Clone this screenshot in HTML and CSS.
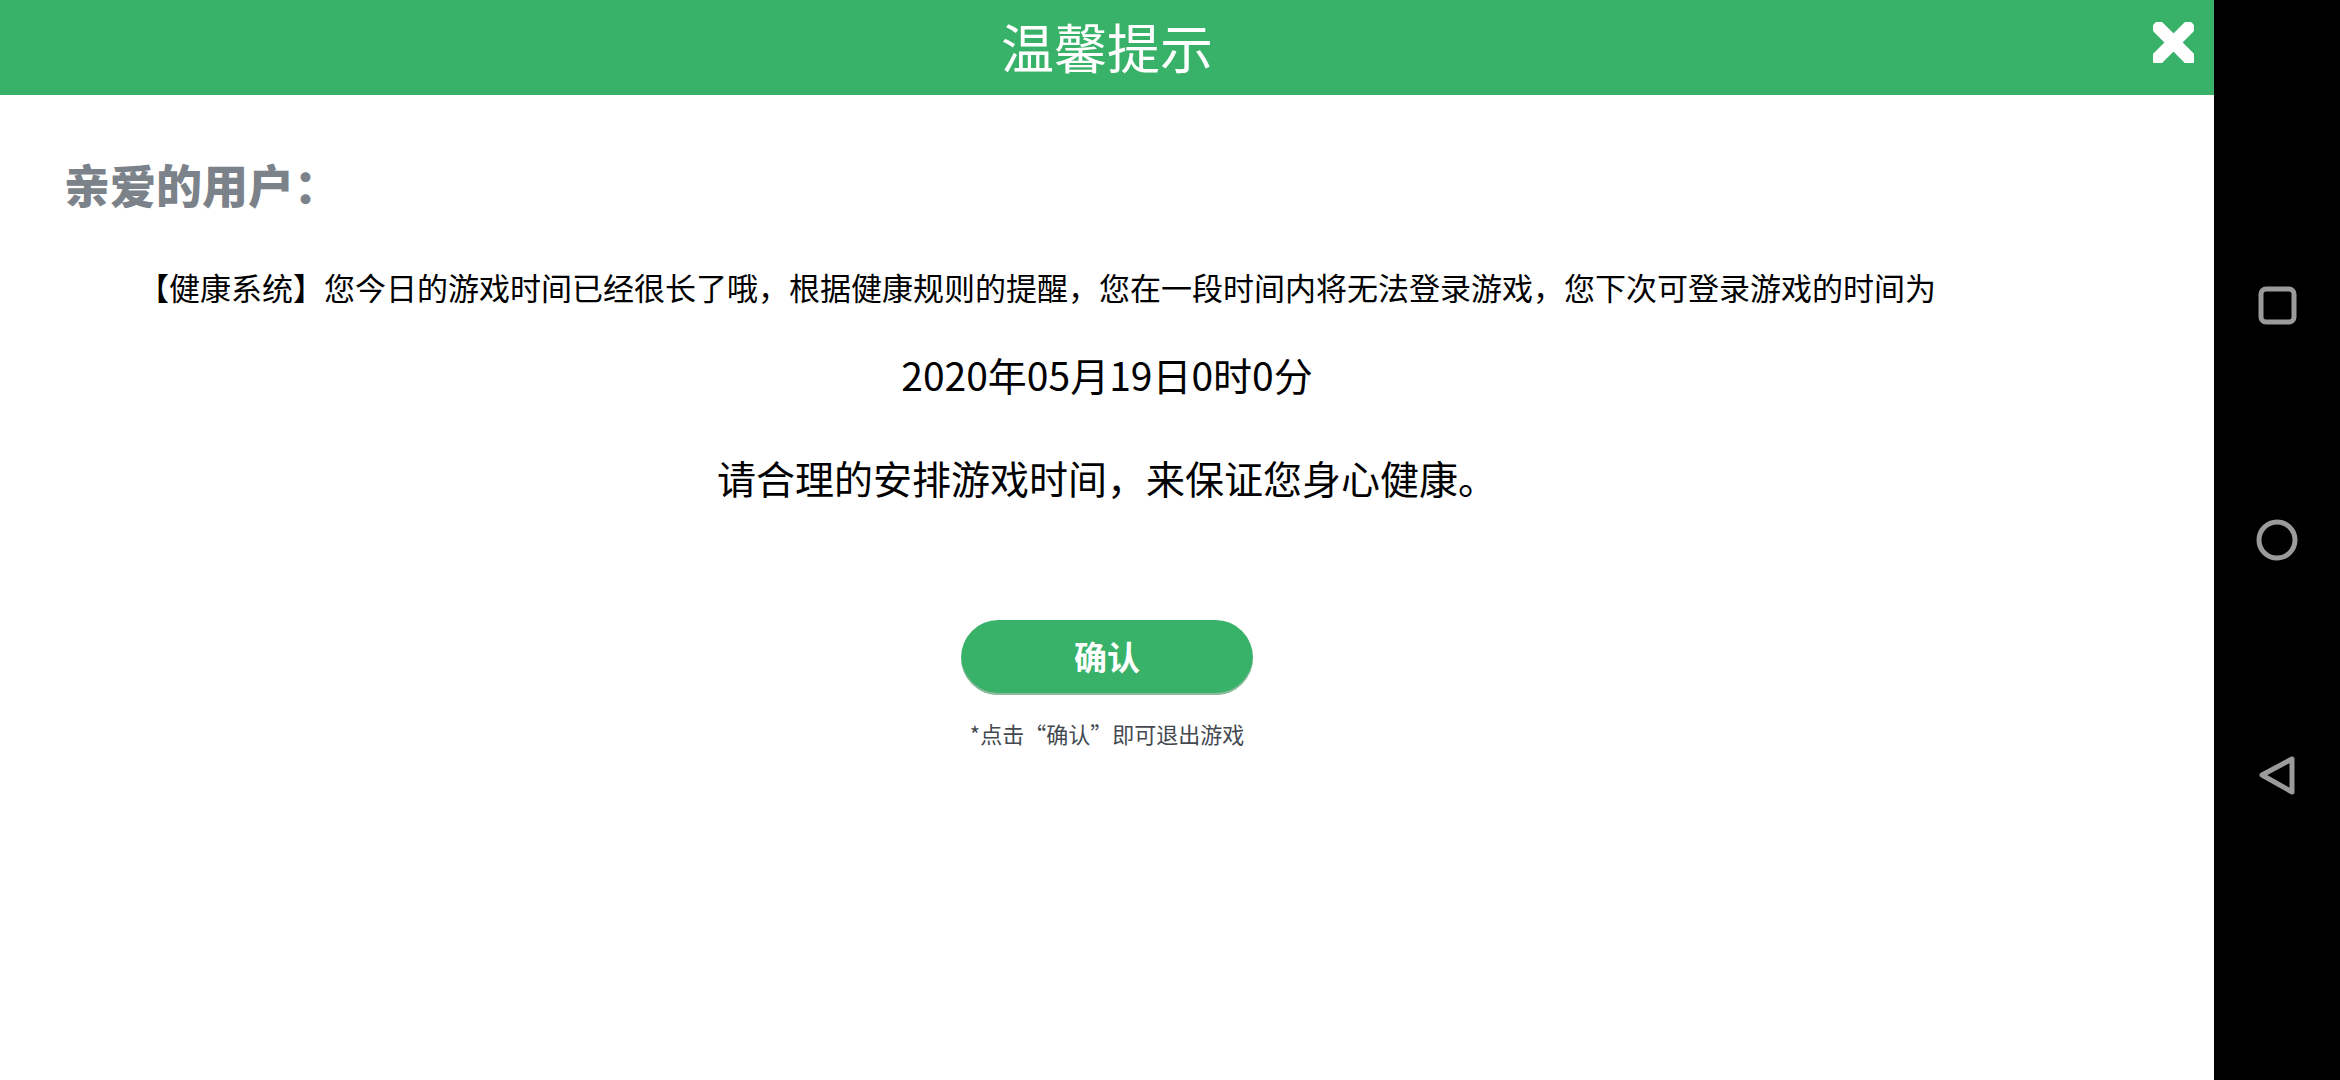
FILE: index.html
```
<!DOCTYPE html>
<html lang="zh-CN">
<head>
  <meta charset="UTF-8">
  <meta name="viewport" content="width=device-width, initial-scale=1.0">
  <title>温馨提示</title>
  <link rel="stylesheet" href="styles.css">
</head>
<body>
  <div class="dialog">
    <header class="dialog-header">
      <h1>温馨提示</h1>
      <button class="close-btn" type="button" aria-label="关闭">
        <svg viewBox="0 0 41 41" width="41" height="41">
          <path d="M6 6 L37 37 M35 6 L5 36" stroke="#fff" stroke-width="13" stroke-linecap="round"/>
        </svg>
      </button>
    </header>

    <main class="dialog-body">
      <h2>亲爱的用户：</h2>
      <p class="message">【健康系统】您今日的游戏时间已经很长了哦，根据健康规则的提醒，您在一段时间内将无法登录游戏，您下次可登录游戏的时间为</p>
      <p class="date">2020年05月19日0时0分</p>
      <p class="advice">请合理的安排游戏时间，来保证您身心健康。</p>
      <button class="confirm-btn" type="button">确认</button>
      <p class="note">*点击“确认”即可退出游戏</p>
    </main>
  </div>

  <!-- Android navigation bar -->
  <nav class="nav-bar">
    <button type="button" aria-label="最近任务">
      <svg viewBox="0 0 42 42" width="42" height="42">
        <rect x="5" y="5" width="33" height="33" rx="5"/>
      </svg>
    </button>
    <button type="button" aria-label="主屏幕">
      <svg viewBox="0 0 42 42" width="42" height="42">
        <circle cx="21" cy="21" r="18"/>
      </svg>
    </button>
    <button type="button" aria-label="返回">
      <svg viewBox="0 0 42 42" width="42" height="42">
        <path d="M36 5 V38 L6 21 Z"/>
      </svg>
    </button>
  </nav>
</body>
</html>
```

FILE: styles.css
```
* {
  box-sizing: border-box;
}
body {
  margin: 0;
  min-height: 100vh;
  display: flex;
  background-color: #fff;
  color: #000;
  font-family: "Noto Sans CJK SC", sans-serif;
}
h1, h2, p {
  margin: 0;
  font-weight: 400;
}
button {
  padding: 0;
  border: none;
  background: none;
  font-family: inherit;
  cursor: pointer;
}
svg {
  display: block;
  fill: none;
}
.dialog {
  flex: 1;
}
.dialog-header {
  position: relative;
  height: 95px;
  padding-bottom: 4px;
  display: flex;
  justify-content: center;
  align-items: center;
  background-color: #38b268;
  color: #fff;
}
.dialog-header h1 {
  font-size: 53px;
  line-height: 64px;
}
.close-btn {
  position: absolute;
  top: 22px;
  right: 20px;
}
.dialog-body {
  padding: 58px 64px;
  display: flex;
  flex-direction: column;
  align-items: center;
}
.dialog-body h2 {
  align-self: flex-start;
  color: #7c828a;
  font-size: 46px;
  font-weight: 900;
  line-height: 60px;
}
.message {
  align-self: flex-start;
  margin-top: 50px;
  padding-left: 74px;
  font-size: 31px;
  line-height: 48px;
}
.date,
.advice {
  font-size: 39px;
  line-height: 60px;
}
.date {
  margin-top: 33px;
}
.advice {
  margin-top: 43px;
}
.confirm-btn {
  width: 292px;
  height: 75px;
  margin-top: 113px;
  padding-bottom: 3px;
  border-radius: 38px;
  background-color: #38b268;
  box-shadow: inset 0 -2px 0 #8fb8a0;
  color: #fff;
  font-size: 33px;
  font-weight: 700;
  line-height: 48px;
}
.note {
  margin-top: 22px;
  color: #444950;
  font-size: 22px;
  line-height: 32px;
}
.nav-bar {
  width: 126px;
  display: flex;
  flex-direction: column;
  justify-content: center;
  align-items: center;
  gap: 193px;
  background-color: #000;
}
.nav-bar svg {
  stroke: #9b9b9b;
  stroke-width: 5;
  stroke-linejoin: round;
}
```
